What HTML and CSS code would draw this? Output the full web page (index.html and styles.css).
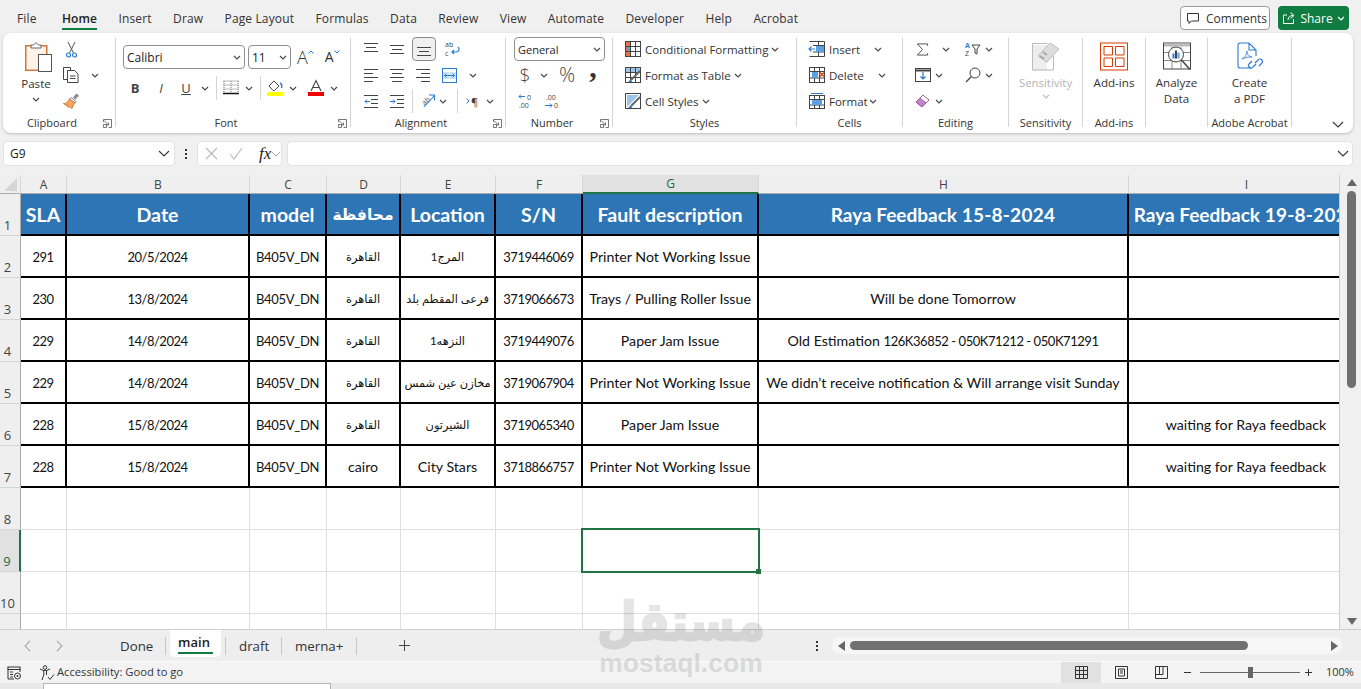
FILE: index.html
```html
<!DOCTYPE html>
<html lang="en">
<head>
<meta charset="utf-8">
<title>Excel</title>
<link rel="stylesheet" href="styles.css">
</head>
<body>
<svg class="defs" aria-hidden="true"><symbol id="chev" viewBox="0 0 8 5"><path d="M1 1l3 3 3-3" fill="none" stroke="#444" stroke-width="1.1"/></symbol></svg>
<header class="menubar">
  <nav class="menu">
    <span class="first">File</span><span class="active">Home</span><span>Insert</span><span>Draw</span><span>Page Layout</span><span>Formulas</span><span>Data</span><span>Review</span><span>View</span><span>Automate</span><span>Developer</span><span>Help</span><span>Acrobat</span>
  </nav>
  <div class="actions">
    <button class="comments"><svg class="ic14" viewBox="0 0 14 14"><path d="M1.5 2.5h11v7.5h-7l-2.5 2.5v-2.5h-1.500z" fill="none" stroke="#333"/></svg>Comments</button>
    <button class="share"><svg class="ic14" viewBox="0 0 14 14"><path d="M5 4H1.500v8.500h10V8M6 9c0-3 2-4.500 5-4.500M8.500 1.500l3.500 3-3.500 3" fill="none" stroke="#fff"/></svg>Share<svg class="chev white" viewBox="0 0 8 5"><path d="M1 1l3 3 3-3" fill="none" stroke="#fff" stroke-width="1.2"/></svg></button>
  </div>
</header>

<section class="ribbon">
  <div class="group g1">
    <div class="gbody">
      <div class="big paste">
        <svg class="ic-paste" viewBox="0 0 27 30"><rect x="0.750" y="3.750" width="21" height="24.500" fill="#fdf3e6" stroke="#d5763a" stroke-width="1.500"/><path d="M6 6V3h2.500l2.500-2.500L13.500 3H16v3z" fill="#fff" stroke="#666"/><rect x="13.500" y="12.500" width="13" height="17" fill="#fff" stroke="#555"/></svg>
        <span class="lbl">Paste</span>
        <svg class="chev mt5"><use href="#chev"/></svg>
      </div>
      <div class="rows ml8">
        <div class="r"><svg class="ml3 ic-cut" viewBox="0 0 11 17"><path d="M2 1l5.500 11M9 1L3.500 12" fill="none" stroke="#555"/><circle cx="2.500" cy="14" r="2" fill="none" stroke="#2b7cd3" stroke-width="1.200"/><circle cx="8.500" cy="14" r="2" fill="none" stroke="#2b7cd3" stroke-width="1.200"/></svg></div>
        <div class="r"><svg class="ic16" viewBox="0 0 16 16"><path d="M4 12.500H.5V.5h7l0 3" fill="none" stroke="#444"/><path d="M4.500 3.500h7l3.500 3.500v8.500H4.500z" fill="#fff" stroke="#444"/><path d="M7 9h5.500M7 11.500h5.500" stroke="#444"/></svg><svg class="chev ml12"><use href="#chev"/></svg></div>
        <div class="r"><svg class="ic16" viewBox="0 0 16 16"><path d="M10.500 4.500l3-3.500 2 1.800-3.300 3.300z" fill="#999" stroke="#666" stroke-width=".8"/><path d="M8 4.500l5 4-1 1.500-5.500-4z" fill="#fff" stroke="#666" stroke-width=".8"/><path d="M6.500 6l5 4-2.500 5.500-2.500-2-1 1L4 13l.5-1.500-1.500 1L.5 10.500l3-.5z" fill="#f6a75f" stroke="#d5763a" stroke-width=".9"/></svg></div>
      </div>
    </div>
    <div class="glabel"><span>Clipboard</span><svg class="launch" viewBox="0 0 9 9"><path d="M.5 3V.5h8v8H5.500M1 1.500l4.500 4.500M5.500 3.500V6H3" fill="none" stroke="#555" stroke-width=".8"/><path d="M.5 5.500v3h3v-3z" fill="none" stroke="#555" stroke-width=".8"/></svg></div>
  </div>

  <div class="group g2">
    <div class="gbody col">
      <div class="fontrow">
        <div class="select fontname"><span>Calibri</span><svg class="chev"><use href="#chev"/></svg></div>
        <div class="select fontsize"><span>11</span><svg class="chev"><use href="#chev"/></svg></div>
        <span class="growa ml6">A<svg class="caret" viewBox="0 0 6 4"><path d="M.5 3.500L3 1l2.500 2.500" fill="none" stroke="#2b7cd3"/></svg></span>
        <span class="growa small ml11">A<svg class="caret" viewBox="0 0 6 4"><path d="M.5 .5L3 3l2.500-2.500" fill="none" stroke="#2b7cd3"/></svg></span>
      </div>
      <div class="fmtrow">
        <b class="fmt ml6">B</b><i class="fmt ml14">I</i><u class="fmt ml13">U</u>
        <svg class="chev ml9"><use href="#chev"/></svg><span class="vsep ml7"></span>
        <svg class="ic16 ml6" viewBox="0 0 16 16"><path d="M.5 1h15M.5 5h15M.5 9h15M1 1v11M8 1v11M15 1v11" fill="none" stroke="#777" stroke-dasharray="1 1"/><path d="M0 13.500h16" stroke="#111" stroke-width="1.500"/></svg>
        <svg class="chev ml6"><use href="#chev"/></svg><span class="vsep ml7"></span>
        <svg class="ic16 ml6" viewBox="0 0 16 16"><path d="M2 6l5-5 5 5-4.500 4.500H6z" fill="#fff" stroke="#444"/><path d="M13 3c2 1 2 3 1.500 5" fill="none" stroke="#2b7cd3" stroke-width="1.500"/><rect y="12" width="16" height="4" fill="#ffff00"/></svg>
        <svg class="chev ml6"><use href="#chev"/></svg>
        <svg class="ic16 ml11" viewBox="0 0 16 16"><path d="M3 11L8 0.500 13 11M5 7.500h6" fill="none" stroke="#444" stroke-width="1.100"/><rect y="12" width="16" height="4" fill="#f00000"/></svg>
        <svg class="chev ml6"><use href="#chev"/></svg>
      </div>
    </div>
    <div class="glabel"><span>Font</span><svg class="launch" viewBox="0 0 9 9"><path d="M.5 3V.5h8v8H5.500M1 1.500l4.500 4.500M5.500 3.500V6H3" fill="none" stroke="#555" stroke-width=".8"/><path d="M.5 5.500v3h3v-3z" fill="none" stroke="#555" stroke-width=".8"/></svg></div>
  </div>

  <div class="group g3">
    <div class="gbody">
      <div class="rows">
        <div class="r">
          <svg class="ic15 ml13" viewBox="0 0 15 15"><path d="M0 1.500h14M2 5.500h10M0 9.500h14" stroke="#444"/></svg>
          <svg class="ic15 ml11" viewBox="0 0 15 15"><path d="M0 3.500h14M2 7.500h10M0 11.500h14" stroke="#444"/></svg>
          <span class="pressed ml7"><svg class="ic15" viewBox="0 0 15 15"><path d="M0 5.500h14M2 9.500h10M0 13.500h14" stroke="#444"/></svg></span>
          <svg class="ic16 ml8" viewBox="0 0 16 16"><text x="1" y="6" class="svgt">ab</text><text x="1" y="15" class="svgt">c</text><path d="M14 6c2 2 1 5-2 5H8M10 9l-2 2 2 2" fill="none" stroke="#2b7cd3" stroke-width="1.200"/></svg>
        </div>
        <div class="r">
          <svg class="ic15 ml13" viewBox="0 0 15 15"><path d="M0 1.500h14M0 5.500h9M0 9.500h14M0 13.500h9" stroke="#444"/></svg>
          <svg class="ic15 ml11" viewBox="0 0 15 15"><path d="M0 1.500h14M2 5.500h10M0 9.500h14M2 13.500h10" stroke="#444"/></svg>
          <svg class="ic15 ml11" viewBox="0 0 15 15"><path d="M0 1.500h14M5 5.500h9M0 9.500h14M5 13.500h9" stroke="#444"/></svg>
          <svg class="ic15 ml11" viewBox="0 0 15 15"><rect x=".5" y=".5" width="14" height="14" fill="#fff" stroke="#2b7cd3"/><rect x="1" y="4" width="13" height="7" fill="#cfe3f7"/><path d="M2.500 7.500h10M4.500 5.500l-2 2 2 2M10.500 5.500l2 2-2 2" fill="none" stroke="#2b7cd3"/></svg>
          <svg class="chev ml12"><use href="#chev"/></svg>
        </div>
        <div class="r">
          <svg class="ic15 ml13" viewBox="0 0 15 15"><path d="M0 1.500h14M7 5.500h7M7 9.500h7M0 13.500h14" fill="none" stroke="#444"/><path d="M6 7.500H1M3 5.500l-2 2 2 2" fill="none" stroke="#2b7cd3"/></svg>
          <svg class="ic15 ml11" viewBox="0 0 15 15"><path d="M0 1.500h14M7 5.500h7M7 9.500h7M0 13.500h14" stroke="#444"/><path d="M0 7.500h5M3 5.500l2 2-2 2" fill="none" stroke="#2b7cd3"/></svg>
          <span class="vsep ml7"></span>
          <svg class="ic16 ml6" viewBox="0 0 16 16"><text x="0" y="8" class="svgt rot">ab</text><path d="M5 14L15 3M10 2h5.500v5.500" fill="none" stroke="#2b7cd3" stroke-width="1.100"/></svg>
          <svg class="chev ml4"><use href="#chev"/></svg>
          <span class="vsep ml10"></span>
          <span class="rtl ml8"><svg class="caret2" viewBox="0 0 4 6"><path d="M.5.5L3 3 .5 5.500" fill="none" stroke="#2b7cd3"/></svg>¶</span>
          <svg class="chev ml8"><use href="#chev"/></svg>
        </div>
      </div>
    </div>
    <div class="glabel"><span>Alignment</span><svg class="launch" viewBox="0 0 9 9"><path d="M.5 3V.5h8v8H5.500M1 1.500l4.500 4.500M5.500 3.500V6H3" fill="none" stroke="#555" stroke-width=".8"/><path d="M.5 5.500v3h3v-3z" fill="none" stroke="#555" stroke-width=".8"/></svg></div>
  </div>

  <div class="group g4">
    <div class="gbody">
      <div class="rows">
        <div class="r"><div class="select numfmt ml8"><span>General</span><svg class="chev"><use href="#chev"/></svg></div></div>
        <div class="r"><span class="sym dollar ml13">$</span><svg class="chev ml9"><use href="#chev"/></svg><span class="sym pct ml10">%</span><span class="sym comma ml12">,</span></div>
        <div class="r">
          <svg class="ic16 ml12" viewBox="0 0 16 16"><path d="M7 3.500H1M3 1.500l-2 2 2 2" fill="none" stroke="#2b7cd3"/><text x="9" y="6.500" class="svgt">0</text><text x="1" y="15" class="svgt">.00</text></svg>
          <svg class="ic16 ml10" viewBox="0 0 16 16"><text x="2" y="6.500" class="svgt">.00</text><path d="M1 12.500h7M6 10.500l2 2-2 2" fill="none" stroke="#2b7cd3"/><text x="10" y="15" class="svgt">0</text></svg>
        </div>
      </div>
    </div>
    <div class="glabel"><span>Number</span><svg class="launch" viewBox="0 0 9 9"><path d="M.5 3V.5h8v8H5.500M1 1.500l4.500 4.500M5.500 3.500V6H3" fill="none" stroke="#555" stroke-width=".8"/><path d="M.5 5.500v3h3v-3z" fill="none" stroke="#555" stroke-width=".8"/></svg></div>
  </div>

  <div class="group g5">
    <div class="gbody">
      <div class="rows">
        <div class="r ml12"><svg class="ic16" viewBox="0 0 16 16"><rect x=".5" y=".5" width="15" height="15" fill="#fff" stroke="#444"/><rect x="1" y="1" width="5" height="14" fill="#e8734a"/><rect x="2" y="6" width="3" height="4" fill="#5ba0e0"/><path d="M.5 5.500h15M.5 10.500h15M5.500.5v15M10.500.5v15" stroke="#444" fill="none"/></svg><span class="ml4">Conditional Formatting</span><svg class="chev ml3"><use href="#chev"/></svg></div>
        <div class="r ml12"><svg class="ic16" viewBox="0 0 16 16"><rect x=".5" y=".5" width="15" height="15" fill="#fff" stroke="#444"/><rect x="1" y="1" width="14" height="4" fill="#9cc3e8"/><path d="M.5 5.500h15M.5 10.500h15M5.500.5v15M10.500.5v15" stroke="#444" fill="none"/><path d="M15 4L6 13" stroke="#666" stroke-width="2"/><path d="M6 12l-3 3 4 0z" fill="#2b7cd3"/></svg><span class="ml4">Format as Table</span><svg class="chev ml3"><use href="#chev"/></svg></div>
        <div class="r ml12"><svg class="ic16" viewBox="0 0 16 16"><rect x=".5" y=".5" width="15" height="15" fill="#fff" stroke="#444"/><path d="M2 2h12L2 14z" fill="#9cc3e8"/><path d="M15 4L6 13" stroke="#666" stroke-width="2"/><path d="M6 12l-3 3 4 0z" fill="#2b7cd3"/></svg><span class="ml4">Cell Styles</span><svg class="chev ml3"><use href="#chev"/></svg></div>
      </div>
    </div>
    <div class="glabel plain"><span>Styles</span></div>
  </div>

  <div class="group g6">
    <div class="gbody">
      <div class="rows">
        <div class="r ml12"><svg class="ic16" viewBox="0 0 16 16"><path d="M4 .5h11.500v15H4M.5 .5H4M.5 15.500H4M9.500 .5v4M9.500 11v4.500M4 4.500h11.500M4 11h11.500" fill="none" stroke="#444"/><rect x="7" y="5" width="8" height="6" fill="#5ba0e0"/><path d="M6 8H0M2.500 5.500L0 8l2.500 2.500" fill="none" stroke="#2b7cd3" stroke-width="1.100"/></svg><span class="cellt w45">Insert</span><svg class="chev"><use href="#chev"/></svg></div>
        <div class="r ml12"><svg class="ic16" viewBox="0 0 16 16"><rect x=".5" y=".5" width="15" height="15" fill="#fff" stroke="#444"/><path d="M.5 4.500h15M.5 11h15M5.500.5v15M10.500.5v15" stroke="#444" fill="none"/><rect x="3" y="5" width="6" height="6" fill="#5ba0e0"/><path d="M11 5.500l4 4M15 5.500l-4 4" stroke="#d83b01" stroke-width="1.200"/></svg><span class="cellt w49">Delete</span><svg class="chev"><use href="#chev"/></svg></div>
        <div class="r ml12"><svg class="ic16" viewBox="0 0 16 16"><rect x=".5" y="2.500" width="15" height="13" fill="#fff" stroke="#444"/><path d="M.5 6.500h15M.5 12h15M5.500 2.500v13M10.500 2.500v13" stroke="#444" fill="none"/><rect x="3" y="7" width="10" height="5" fill="#5ba0e0"/><path d="M2 .5h12" stroke="#2b7cd3"/></svg><span class="cellt w40">Format</span><svg class="chev"><use href="#chev"/></svg></div>
      </div>
    </div>
    <div class="glabel plain"><span>Cells</span></div>
  </div>

  <div class="group g7">
    <div class="gbody">
      <div class="rows">
        <div class="r"><svg class="ic13 ml13" viewBox="0 0 13 14"><path d="M12 3V1H1l5.500 6L1 13h11v-2" fill="none" stroke="#444"/></svg><svg class="chev ml13"><use href="#chev"/></svg><svg class="ic16 ml15" viewBox="0 0 16 16"><text x="0" y="6.500" class="svgt azb">A</text><text x="0" y="15" class="svgt">Z</text><path d="M7 4h8l-3 4v5l-2-1V8z" fill="none" stroke="#444"/></svg><svg class="chev ml4"><use href="#chev"/></svg></div>
        <div class="r"><svg class="ic16 ml12" viewBox="0 0 16 16"><rect x=".5" y="1.500" width="15" height="13" fill="#fff" stroke="#444"/><path d="M.5 3.500h15" stroke="#444" stroke-width="2"/><path d="M8 5v7M5.500 9.500L8 12l2.500-2.500" fill="none" stroke="#2b7cd3" stroke-width="1.200"/></svg><svg class="chev ml4"><use href="#chev"/></svg><svg class="ic16 ml22" viewBox="0 0 16 16"><circle cx="10" cy="6" r="5" fill="none" stroke="#444"/><path d="M6.500 9.500L1 15" stroke="#444" stroke-width="1.200"/></svg><svg class="chev ml4"><use href="#chev"/></svg></div>
        <div class="r"><svg class="ic16 ml12" viewBox="0 0 16 16"><path d="M1 9l7-7 6 5-7 7z" fill="#fff" stroke="#a35ea8"/><path d="M1 9l4-4 6 5-4 4z" fill="#c583c9" stroke="#a35ea8"/></svg><svg class="chev ml4"><use href="#chev"/></svg></div>
      </div>
    </div>
    <div class="glabel plain"><span>Editing</span></div>
  </div>

  <div class="group g8">
    <div class="gbody big">
      <svg class="ic-big" viewBox="0 0 28 29"><path d="M1 3h14l0 26H21.500H1z" fill="#eee"/><path d="M.5 1.500h15M.5 1.500V28h21V14" fill="none" stroke="#bbb"/><path d="M18 1l9 6-12 13-9-6z" fill="#ddd" stroke="#bbb"/><path d="M8 14l4 3M11 10l4 3" stroke="#aaa" stroke-width="2"/></svg>
      <span class="lbl gray">Sensitivity</span>
      <svg class="chev mt3 faded"><use href="#chev"/></svg>
    </div>
    <div class="glabel plain"><span>Sensitivity</span></div>
  </div>

  <div class="group g9">
    <div class="gbody big">
      <svg class="ic-big" viewBox="0 0 28 28"><rect x=".5" y=".5" width="27" height="27" fill="#fff" stroke="#d83b01"/><path d="M4 4h8.500v8.500H4zM15.500 4H24v8.500h-8.500zM4 15.500h8.500V24H4zM15.500 15.500H24V24h-8.500z" fill="none" stroke="#d83b01"/></svg>
      <span class="lbl">Add-ins</span>
    </div>
    <div class="glabel plain"><span>Add-ins</span></div>
  </div>

  <div class="group g10">
    <div class="gbody big">
      <svg class="ic-big" viewBox="0 0 28 28"><rect x=".5" y=".5" width="27" height="26" fill="#fff" stroke="#444"/><rect x="1" y="1" width="26" height="3" fill="#bbb"/><path d="M1 10h26M1 18h26M9 4v23M18 4v23" stroke="#888"/><circle cx="13" cy="12" r="7.500" fill="#fff" stroke="#444"/><rect x="9.500" y="11" width="2" height="5" fill="#2b7cd3"/><rect x="12" y="8" width="2" height="8" fill="#444"/><rect x="14.500" y="10" width="2" height="6" fill="#5ba0e0"/><path d="M18.500 17.500L27 27" stroke="#444" stroke-width="1.500"/></svg>
      <span class="lbl">Analyze<br>Data</span>
    </div>
    <div class="glabel plain hidden"><span>&nbsp;</span></div>
  </div>

  <div class="group g11">
    <div class="gbody big pdf">
      <svg class="ic-pdf" viewBox="0 0 26 28"><path d="M1 3a2 2 0 0 1 2-2h9l7 7v6M12 1v7h7M1 3v21a2 2 0 0 0 2 2h11" fill="none" stroke="#2b7cd3" stroke-width="1.100"/><path d="M5 17c3-1 5-5 5-8 0 3 1 5 5 6-3 0-7 0-10 2z" fill="none" stroke="#2b7cd3" stroke-width=".8"/><path d="M17 20l3-3a2.500 2.500 0 0 1 4 3l-3 3M18 21l-3 3a2.500 2.500 0 0 1-4-3l3-3" transform="translate(1 1)" fill="none" stroke="#2b7cd3" stroke-width="1.200"/></svg>
      <span class="lbl">Create<br>a PDF</span>
    </div>
    <div class="glabel plain"><span>Adobe Acrobat</span></div>
  </div>
  <svg class="collapse" viewBox="0 0 12 7"><path d="M1 1l5 5 5-5" fill="none" stroke="#333" stroke-width="1.100"/></svg>
</section>

<section class="formula">
  <div class="fbox namebox"><span>G9</span><svg class="fchev" viewBox="0 0 12 7"><path d="M1 1l5 5 5-5" fill="none" stroke="#333" stroke-width="1.100"/></svg></div>
  <div class="dots"><i></i><i></i><i></i></div>
  <div class="fbox fxbox">
    <svg class="ic13" viewBox="0 0 13 13"><path d="M1 1l11 11M12 1L1 12" stroke="#bbb" stroke-width="1.200"/></svg>
    <svg class="ic13 tick" viewBox="0 0 14 13"><path d="M1 7l4 5 8-11" fill="none" stroke="#bbb" stroke-width="1.200"/></svg>
    <i class="fx">fx</i>
    <svg class="fchev2" viewBox="0 0 12 7"><path d="M1 1l5 5 5-5" fill="none" stroke="#999" stroke-width="1.100"/></svg>
  </div>
  <div class="fbox finput"><svg class="fchev" viewBox="0 0 12 7"><path d="M1 1l5 5 5-5" fill="none" stroke="#333" stroke-width="1.100"/></svg></div>
</section>

<section class="sheet">
  <div class="gridwrap">
    <div class="grid">
      <div class="ch corner"><svg viewBox="0 0 13 13"><path d="M13 0v13H0z" fill="#d6d6d6"/></svg></div>
      <div class="ch">A</div><div class="ch">B</div><div class="ch">C</div><div class="ch">D</div><div class="ch">E</div><div class="ch">F</div><div class="ch sel">G</div><div class="ch">H</div><div class="ch">I</div>

      <div class="rh">1</div>
      <div class="c hd">SLA</div><div class="c hd">Date</div><div class="c hd">model</div><div class="c hd ar">محافظة</div><div class="c hd">Location</div><div class="c hd">S/N</div><div class="c hd">Fault description</div><div class="c hd wide"><span>Raya Feedback <span class="hn">15-8-2024</span></span></div><div class="c hd wide"><span>Raya Feedback <span class="hn">19-8-2024</span></span></div>

      <div class="rh">2</div>
      <div class="c n">291</div><div class="c n">20/5/2024</div><div class="c m">B405V_DN</div><div class="c ar">القاهرة</div><div class="c ar">المرج1</div><div class="c n">3719446069</div><div class="c">Printer Not Working Issue</div><div class="c"></div><div class="c"></div>

      <div class="rh">3</div>
      <div class="c n">230</div><div class="c n">13/8/2024</div><div class="c m">B405V_DN</div><div class="c ar">القاهرة</div><div class="c ar">فرعى المقطم بلد</div><div class="c n">3719066673</div><div class="c">Trays / Pulling Roller Issue</div><div class="c">Will be done Tomorrow</div><div class="c"></div>

      <div class="rh">4</div>
      <div class="c n">229</div><div class="c n">14/8/2024</div><div class="c m">B405V_DN</div><div class="c ar">القاهرة</div><div class="c ar">النزهه1</div><div class="c n">3719449076</div><div class="c">Paper Jam Issue</div><div class="c"><span>Old Estimation <span class="ns">126K36852 - 050K71212 - 050K71291</span></span></div><div class="c"></div>

      <div class="rh">5</div>
      <div class="c n">229</div><div class="c n">14/8/2024</div><div class="c m">B405V_DN</div><div class="c ar">القاهرة</div><div class="c ar">مخازن عين شمس</div><div class="c n">3719067904</div><div class="c">Printer Not Working Issue</div><div class="c">We didn’t receive notification &amp; Will arrange visit Sunday</div><div class="c"></div>

      <div class="rh">6</div>
      <div class="c n">228</div><div class="c n">15/8/2024</div><div class="c m">B405V_DN</div><div class="c ar">القاهرة</div><div class="c ar">الشيرتون</div><div class="c n">3719065340</div><div class="c">Paper Jam Issue</div><div class="c"></div><div class="c">waiting for Raya feedback</div>

      <div class="rh">7</div>
      <div class="c n">228</div><div class="c n">15/8/2024</div><div class="c m">B405V_DN</div><div class="c">cairo</div><div class="c">City Stars</div><div class="c n">3718866757</div><div class="c">Printer Not Working Issue</div><div class="c"></div><div class="c">waiting for Raya feedback</div>

      <div class="rh">8</div>
      <div class="e"></div><div class="e"></div><div class="e"></div><div class="e"></div><div class="e"></div><div class="e"></div><div class="e"></div><div class="e"></div><div class="e"></div>
      <div class="rh sel">9</div>
      <div class="e"></div><div class="e"></div><div class="e"></div><div class="e"></div><div class="e"></div><div class="e"></div><div class="e active-cell"></div><div class="e"></div><div class="e"></div>
      <div class="rh">10</div>
      <div class="e"></div><div class="e"></div><div class="e"></div><div class="e"></div><div class="e"></div><div class="e"></div><div class="e"></div><div class="e"></div><div class="e"></div>
      <div class="rh"></div>
      <div class="e"></div><div class="e"></div><div class="e"></div><div class="e"></div><div class="e"></div><div class="e"></div><div class="e"></div><div class="e"></div><div class="e"></div>
    </div>
  </div>
  <div class="vscroll">
    <svg class="arrow" viewBox="0 0 10 7"><path d="M5 0l5 7H0z" fill="#666"/></svg>
    <div class="vthumb"></div>
    <svg class="arrow down" viewBox="0 0 10 7"><path d="M5 7l5-7H0z" fill="#666"/></svg>
  </div>
</section>

<section class="tabsbar">
  <svg class="nav" viewBox="0 0 7 12"><path d="M6 1L1 6l5 5" fill="none" stroke="#aaa" stroke-width="1.100"/></svg>
  <svg class="nav ml25" viewBox="0 0 7 12"><path d="M1 1l5 5-5 5" fill="none" stroke="#aaa" stroke-width="1.100"/></svg>
  <span class="tab t-done">Done</span><span class="tsep"></span>
  <span class="tab t-main"><b>main</b></span><span class="tsep t2"></span>
  <span class="tab t-draft">draft</span><span class="tsep t3"></span>
  <span class="tab t-merna">merna+</span><span class="tsep t4"></span>
  <svg class="plus" viewBox="0 0 11 11"><path d="M5.500 0v11M0 5.500h11" stroke="#444"/></svg>
  <div class="dots d2"><i></i><i></i><i></i></div>
  <div class="hscroll">
    <svg class="harrow" viewBox="0 0 7 10"><path d="M0 5l7-5v10z" fill="#666"/></svg>
    <div class="hthumb"></div>
    <svg class="harrow" viewBox="0 0 7 10"><path d="M7 5L0 0v10z" fill="#666"/></svg>
  </div>
</section>

<footer class="status">
  <svg class="ic14 st1" viewBox="0 0 14 14"><path d="M.5 1h13M.5 3.500h13M1 1v12h6M13 1v5M3 6h3M3 8.500h3M3 11h3" fill="none" stroke="#333"/><circle cx="10.500" cy="10" r="3" fill="none" stroke="#333"/><circle cx="10.500" cy="10" r="1" fill="#333"/></svg>
  <svg class="ic16 st2" viewBox="0 0 16 16"><circle cx="6" cy="2.500" r="1.800" fill="none" stroke="#333"/><path d="M1 4l3.500 1.500h3L11 4M4.500 5.500L5 9l-2 6M7.500 5.500V10M9 12l2 2.500 4-5" fill="none" stroke="#333"/></svg>
  <span class="acc">Accessibility: Good to go</span>
  <div class="views">
    <span class="vbtn on"><svg class="ic13" viewBox="0 0 13 13"><path d="M.5.5h12v12H.5zM.5 4.500h12M.5 8.500h12M4.500.5v12M8.500.5v12" fill="none" stroke="#333"/></svg></span>
    <span class="vbtn"><svg class="ic13" viewBox="0 0 13 13"><path d="M.5.5h12v12H.5zM3.500 3h6v7h-6zM5 5h3M5 7h3" fill="none" stroke="#333"/></svg></span>
    <span class="vbtn"><svg class="ic13" viewBox="0 0 13 13"><path d="M.5.5h12v12H.5zM.5 8.500h7.500V.5M4.500.5v8" fill="none" stroke="#333"/></svg></span>
  </div>
  <svg class="zm" viewBox="0 0 9 9"><path d="M1 4.500h7" stroke="#333"/></svg>
  <div class="slider"><i></i></div>
  <svg class="zm" viewBox="0 0 9 9"><path d="M1 4.500h7M4.500 1v7" stroke="#333"/></svg>
  <span class="pct100">100%</span>
</footer>
<div class="taskstrip"><span class="taskbox"></span></div>

<div class="watermark" aria-hidden="true"><span class="wm-ar">مستقل</span><span class="wm-en">mostaql.com</span></div>
</body>
</html>
```

FILE: styles.css
```css
* { box-sizing: border-box; }
html, body { margin: 0; padding: 0; height: 100%; }
body { width: 1361px; height: 689px; overflow: hidden; background: #f0f0f0; color: #262626; font: 12px "Open Sans", sans-serif; position: relative; }
svg { display: block; flex: none; overflow: visible; }
.defs { width: 0; height: 0; position: absolute; }
.ml3 { margin-left: 3px; } .ml4 { margin-left: 4px; } .ml6 { margin-left: 6px; } .ml7 { margin-left: 7px; } .ml8 { margin-left: 8px; } .ml9 { margin-left: 9px; } .ml10 { margin-left: 10px; } .ml11 { margin-left: 11px; } .ml12 { margin-left: 12px; } .ml13 { margin-left: 13px; } .ml14 { margin-left: 14px; } .ml15 { margin-left: 15px; } .ml22 { margin-left: 22px; } .ml25 { margin-left: 25px; }
.mt3 { margin-top: 3px; } .mt5 { margin-top: 5px; }

/* menu */
.menubar { height: 33px; display: flex; justify-content: space-between; }
.menu { display: flex; gap: 21.4px; padding: 10px 0 0 17px; }
.menu span { height: 23px; line-height: 17px; font-size: 12px; letter-spacing: .13px; color: #333; }
.menu .first { margin-right: 4px; }
.menu .active { font-weight: 600; color: #222; position: relative; }
.menu .active::after { content: ""; position: absolute; left: 0; right: 0; top: 18px; height: 2px; background: #107c41; }
.actions { display: flex; gap: 8px; padding: 6px 12px 0 0; }
.actions button { height: 24px; border-radius: 4px; display: flex; align-items: center; font: 12px "Open Sans", sans-serif; padding: 0; }
.comments { width: 90px; border: 1px solid #999; background: #fff; color: #333; gap: 6px; justify-content: flex-start; padding-left: 5px !important; }
.share { width: 71px; border: 0; background: #107c41; color: #fff; gap: 4px; justify-content: center; }
.ic14 { width: 14px; height: 14px; }
.ic13 { width: 13px; height: 13px; }
.ic15 { width: 15px; height: 15px; }
.ic16 { width: 16px; height: 16px; }
.chev { width: 8px; height: 5px; }

/* ribbon */
.ribbon { margin-left: 3px; width: 1350px; height: 100px; background: #fff; border-radius: 8px; box-shadow: 0 1px 3px rgba(0,0,0,.22); display: flex; padding-top: 5px; }
.group { height: 89px; border-right: 1px solid #d4d4d4; display: flex; flex-direction: column; flex: none; }
.g1 { width: 113px; } .g2 { width: 235px; } .g3 { width: 155px; } .g4 { width: 107px; } .g5 { width: 184px; } .g6 { width: 106px; } .g7 { width: 106px; } .g8 { width: 74px; } .g9 { width: 63px; } .g10 { width: 62px; } .g11 { width: 84px; }
.gbody { flex: 1; display: flex; min-height: 0; }
.gbody.col { flex-direction: column; }
.glabel { height: 14px; margin-bottom: -3px; display: flex; align-items: center; line-height: 14px; font-size: 11px; color: #333; flex: none; }
.glabel span { flex: 1; text-align: center; }
.launch { width: 9px; height: 9px; margin: 0 3px 0 2px; }
.rows { display: flex; flex-direction: column; margin-top: -2px; }
.r { height: 26px; display: flex; align-items: center; white-space: nowrap; font-size: 11.500px; color: #333; }
.big { display: flex; flex-direction: column; align-items: center; }
.paste { margin-left: 14px; width: 38px; padding-top: 4px; }
.gbody.big { padding-top: 4px; }
.ic-paste { width: 27px; height: 30px; align-self: flex-start; margin-left: 8px; }
.ic-cut { width: 11px; height: 17px; }
.ic-big { width: 28px; height: 29px; }
.ic-pdf { width: 26px; height: 28px; margin-bottom: 1px; }
.lbl { margin-top: 4px; line-height: 16px; font-size: 11.600px; color: #333; text-align: center; white-space: nowrap; }
.lbl.gray { color: #b5b5b5; font-size: 11.400px; }
.faded { opacity: .35; }
.select { height: 24px; border: 1px solid #8f8f8f; border-radius: 4px; background: #fff; display: flex; align-items: center; justify-content: space-between; padding: 0 3px; font-size: 12px; color: #222; flex: none; }
.fontrow { display: flex; align-items: center; margin: 7px 0 0 7px; }
.fontname { width: 122px; }
.fontsize { width: 43px; margin-left: 3px; }
.growa { font-size: 18px; font-weight: 300; line-height: 20px; color: #333; display: flex; align-items: flex-start; }
.growa.small { font-size: 14px; font-weight: 400; }
.caret { width: 6px; height: 4px; margin-top: 3px; }
.fmtrow { display: flex; align-items: center; height: 24px; margin: 7px 0 0 7px; }
.fmt { width: 12px; text-align: center; font-size: 13px; color: #444; font-family: "Open Sans", sans-serif; flex: none; }
.vsep { width: 1px; height: 24px; background: #d4d4d4; flex: none; }
.pressed { width: 24px; height: 24px; background: #f0f0f0; border: 1px solid #8a8a8a; border-radius: 4px; display: flex; align-items: center; justify-content: center; flex: none; }
.svgt { font: 7px "Open Sans", sans-serif; fill: #444; }
.svgt.rot { transform: rotate(-40deg) translate(-4px, 5px); }
.svgt.azb { fill: #2b7cd3; font-weight: 700; }
.rtl { display: flex; align-items: center; gap: 1px; width: 12px; font-size: 11px; color: #444; flex: none; }
.caret2 { width: 4px; height: 6px; }
.numfmt { width: 91px; font-size: 11px; }
.sym { text-align: center; color: #444; flex: none; }
.dollar { width: 12px; font-size: 19px; font-weight: 300; line-height: 24px; }
.pct { width: 18px; font-size: 20px; font-weight: 300; line-height: 24px; }
.comma { width: 10px; height: 24px; font: 700 30px/8px "Liberation Serif", serif; color: #333; }
.cellt { margin-left: 4px; }
.w45 { width: 45px; } .w49 { width: 49px; } .w40 { width: 40px; }
.hidden { visibility: hidden; }
.collapse { width: 12px; height: 7px; margin: 83px 0 0 40px; }

/* formula bar */
.formula { display: flex; height: 25px; margin: 8px 0 0 3px; }
.fbox { height: 25px; background: #fff; border: 1px solid #e2e2e2; border-radius: 4px; display: flex; align-items: center; flex: none; }
.namebox { width: 172px; padding: 0 4px 0 6px; justify-content: space-between; font-size: 12px; color: #222; }
.fchev { width: 12px; height: 7px; }
.dots { width: 22px; display: flex; flex-direction: column; align-items: center; justify-content: center; gap: 2px; flex: none; }
.dots i { width: 2px; height: 2px; background: #333; display: block; }
.fxbox { width: 85px; padding-left: 7px; }
.tick { margin-left: 11px; width: 14px; }
.fx { font: italic 400 17px "Liberation Serif", serif; color: #222; margin-left: 16px; width: 17px; }
.fchev2 { width: 10px; height: 6px; }
.finput { width: 1066px; margin-left: 5px; justify-content: flex-end; padding-right: 3px; }

/* sheet */
.sheet { display: flex; height: 455px; margin-top: 9px; border-bottom: 1px solid #cfcfcf; }
.gridwrap { width: 1340px; overflow: hidden; border-right: 1px solid #cfcfcf; flex: none; }
.grid { display: grid; width: 1365px; grid-template-columns: 21px 46px 183px 77px 74px 95px 87px 176px 370px 236px; grid-template-rows: 19px repeat(11, 42px); background: #fff; font-family: Lato, "DejaVu Sans", sans-serif; }
.ch { background: #efefef; border-bottom: 1px solid #ababab; border-right: 1px solid #d6d6d6; display: flex; align-items: center; justify-content: center; font: 12px "Open Sans", sans-serif; color: #444; }
.ch.corner { justify-content: flex-end; padding-right: 3px; }
.ch.corner svg { width: 13px; height: 13px; }
.ch.sel { background: #e1e1e1; border-bottom: 2px solid #217346; color: #1c6b3f; }
.rh { background: #efefef; border-right: 1px solid #ababab; border-bottom: 1px solid #d6d6d6; display: flex; align-items: flex-end; justify-content: center; padding: 0 5px 1px 0; font: 13px "Open Sans", sans-serif; color: #444; }
.rh.sel { background: #e1e1e1; border-right: 2px solid #217346; color: #1c6b3f; }
.c { display: flex; align-items: center; justify-content: center; border-right: 2px solid #000; border-bottom: 2px solid #000; font-size: 14.200px; color: #111; white-space: nowrap; overflow: hidden; background: #fff; padding-top: 1px; }
.c.n { font-size: 13px; letter-spacing: -.5px; }
.c.m { font-size: 13px; letter-spacing: -.3px; }
.ns { font-size: 13px; letter-spacing: -.45px; }
.c.hd { background: #2e75b6; color: #fff; font-size: 19.500px; font-weight: 700; }
.c.hd.wide { font-size: 19px; }
.hn { letter-spacing: .25px; }
.c.ar { font-size: 11.400px; }
.c.hd.ar { font-size: 15.500px; }
.e { border-right: 1px solid #dfdfdf; border-bottom: 1px solid #dfdfdf; background: #fff; }
.active-cell { position: relative; }
.active-cell::before { content: ""; position: absolute; left: -2px; top: -2px; right: -2px; bottom: -2px; border: 2px solid #217346; z-index: 2; }
.active-cell::after { content: ""; position: absolute; right: -3px; bottom: -3px; width: 5px; height: 5px; background: #217346; border: 0; z-index: 3; }
.vscroll { flex: 1; display: flex; flex-direction: column; align-items: center; padding: 4px 0 4px 2px; }
.arrow { width: 10px; height: 7px; }
.vthumb { width: 9px; height: 197px; background: #707070; border-radius: 5px; margin-top: 5px; }
.arrow.down { margin-top: auto; }

/* tabs */
.tabsbar { height: 31px; display: flex; align-items: center; background: #eee; padding-left: 24px; }
.nav { width: 7px; height: 12px; }
.tab { font-size: 13.300px; color: #333; flex: none; white-space: nowrap; }
.t-done { margin-left: 57px; width: 34px; }
.tsep { width: 1px; height: 18px; background: #c8c8c8; margin-left: 11px; flex: none; }
.t-main { width: 51px; height: 27px; align-self: flex-start; margin-left: 4px; background: #fff; border-radius: 0 0 5px 5px; text-align: center; line-height: 25px; color: #222; position: relative; font-size: 13px; padding-right: 3px; }
.t-main b { font-weight: 600; }
.t-main::after { content: ""; position: absolute; left: 8px; right: 8px; bottom: 3px; height: 2px; background: #107c41; }
.t2 { margin-left: 4px; }
.t-draft { margin-left: 13px; width: 29px; }
.t3 { margin-left: 13px; }
.t-merna { margin-left: 13px; width: 49px; }
.t4 { margin-left: 12px; }
.plus { width: 11px; height: 11px; margin-left: 42px; }
.d2 { margin-left: 396px; width: 22px; }
.hscroll { width: 510px; height: 17px; margin-left: 4px; background: #f6f6f6; border-radius: 8px; display: flex; align-items: center; padding: 0 4px 0 6px; }
.harrow { width: 7px; height: 10px; }
.hthumb { width: 398px; height: 9px; background: #707070; border-radius: 5px; margin: 0 auto 0 5px; }

/* status */
.status { height: 22px; display: flex; align-items: center; background: #f3f3f3; border-top: 1px solid #fbfbfb; padding-left: 7px; font-size: 11.200px; color: #333; }
.st2 { margin-left: 18px; }
.acc { margin: -2px 0 0 2px; width: 1004px; white-space: nowrap; }
.views { display: flex; height: 21px; }
.vbtn { width: 40px; display: flex; align-items: center; justify-content: center; }
.vbtn.on { background: #e1e1e1; }
.zm { width: 9px; height: 9px; margin-left: 2px; }
.slider { width: 100px; height: 1px; background: #666; margin-left: 8px; position: relative; }
.slider i { position: absolute; left: 48px; top: -5px; width: 5px; height: 11px; background: #666; }
.slider + .zm { margin-left: 4px; }
.pct100 { margin: -2px 0 0 13px; font-size: 11px; }
.taskstrip { height: 6px; background: #e9e9e9; padding-left: 43px; }
.taskbox { display: block; width: 288px; height: 6px; background: #fff; border: 1px solid #b5b5b5; border-bottom: 0; margin-top: 0; }

/* watermark */
.watermark { position: absolute; left: 598px; top: 594px; width: 166px; display: flex; flex-direction: column; align-items: center; color: #000; opacity: .1; pointer-events: none; }
.wm-ar { font: 700 46px/56px "DejaVu Sans", sans-serif; -webkit-text-stroke: 2px #000; transform: scaleY(1.15); }
.wm-en { font: 700 26.500px/24px "Liberation Sans", sans-serif; margin-top: 1px; white-space: nowrap; }
```
